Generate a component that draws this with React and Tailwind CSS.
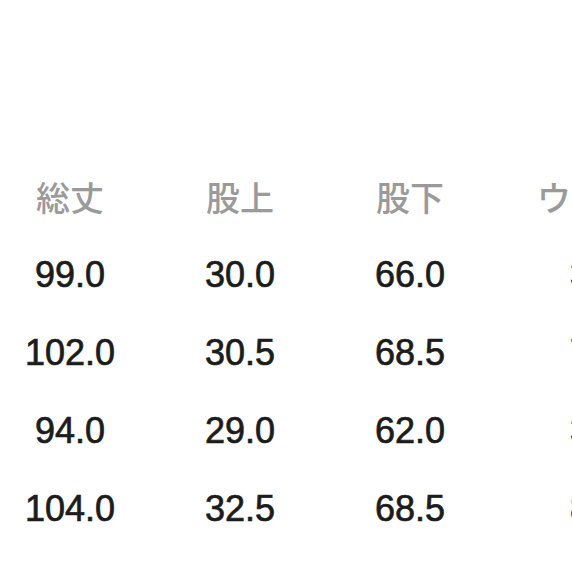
import React from 'react';

const headers = ['総丈', '股上', '股下', 'ウエスト'];

const rows = [
  ['99.0', '30.0', '66.0', '38.0'],
  ['102.0', '30.5', '68.5', '74.0'],
  ['94.0', '29.0', '62.0', '36.0'],
  ['104.0', '32.5', '68.5', '80.0'],
];

// column widths, table starts slightly off the left edge
const colClass = ['w-[170px]', 'w-[170px]', 'w-[170px]', 'w-[220px]'];

const App = () => {
  return (
    <div className="w-[572px] h-[572px] overflow-hidden bg-white pt-[158px]">
      <div className="ml-[-15px] w-[730px]">
        <div className="flex h-[78px] items-center">
          {headers.map((h, i) => (
            <div
              key={h}
              className={`${colClass[i]} shrink-0 text-center text-[34px] font-medium leading-[78px] text-[#9a9a9a] whitespace-nowrap`}
              style={{ fontFamily: '"Noto Sans CJK JP", "Noto Sans", sans-serif' }}
            >
              {h}
            </div>
          ))}
        </div>
        {rows.map((r, ri) => (
          <div key={ri} className="flex h-[78px] items-center">
            {r.map((v, i) => (
              <div
                key={i}
                className={`${colClass[i]} shrink-0 text-center text-[36px] leading-[78px] text-[#1c1c1c] whitespace-nowrap [-webkit-text-stroke:0.7px_#1c1c1c]`}
                style={{ fontFamily: '"Liberation Sans", Arial, sans-serif' }}
              >
                {v}
              </div>
            ))}
          </div>
        ))}
      </div>
    </div>
  );
};

export default App;
